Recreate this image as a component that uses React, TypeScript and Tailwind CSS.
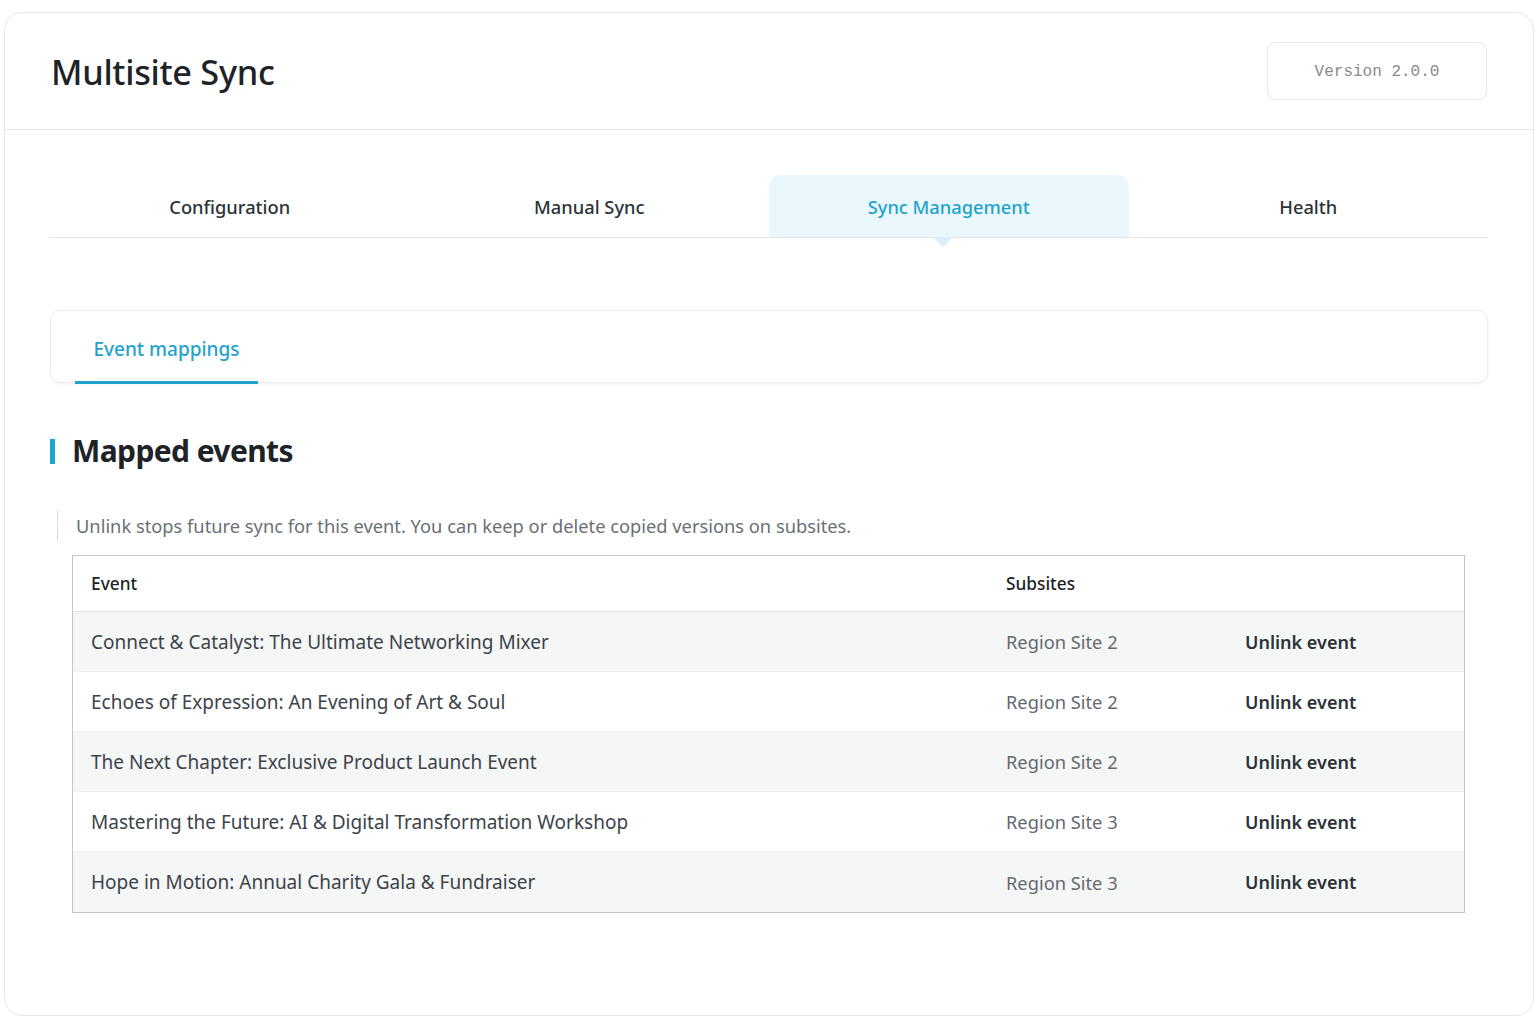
const font = { fontFamily: '"Noto Sans", "Open Sans", sans-serif' };

const tabs = ['Configuration', 'Manual Sync', 'Sync Management', 'Health'];

const rows = [
  { name: 'Connect & Catalyst: The Ultimate Networking Mixer', site: 'Region Site 2' },
  { name: 'Echoes of Expression: An Evening of Art & Soul', site: 'Region Site 2' },
  { name: 'The Next Chapter: Exclusive Product Launch Event', site: 'Region Site 2' },
  { name: 'Mastering the Future: AI & Digital Transformation Workshop', site: 'Region Site 3' },
  { name: 'Hope in Motion: Annual Charity Gala & Fundraiser', site: 'Region Site 3' },
];

export default function App() {
  return (
    <div className="bg-white min-h-[1025px] pl-[4px] pr-[6px] pt-[12px]" style={font}>
      <div className="h-[1004px] rounded-[18px] border border-[#e6e6e6] bg-white">
        {/* header */}
        <header className="h-[117px] flex items-center justify-between px-[46px] border-b border-[#e3e3e3]">
          <h1 className="text-[34.3px] leading-none font-medium text-[#1d2327] tracking-[-0.3px] mt-[2px]">Multisite Sync</h1>
          <div className="w-[220px] h-[58px] mt-[-1px] pt-[2px] rounded-[8px] border border-[#e8e8e8] flex items-center justify-center text-[16px] text-[#8a8a8a]" style={{ fontFamily: '"Liberation Mono", monospace' }}>
            Version 2.0.0
          </div>
        </header>

        <div className="px-[45px] pt-[45px]">
          {/* main tabs */}
          <nav className="grid grid-cols-4 border-b border-[#e4e4e4] h-[63px]">
            {tabs.map((t) => {
              const active = t === 'Sync Management';
              return (
                <div
                  key={t}
                  className={
                    active
                      ? 'relative flex items-center justify-center pt-[2px] rounded-t-[12px] bg-[#eaf7fc] text-[#1fa3cc] text-[18.3px] font-medium'
                      : 'flex items-center justify-center pt-[2px] text-[#2c3338] text-[18.3px] font-medium'
                  }
                >
                  {t}
                  {active && (
                    <span className="absolute left-[164px] top-full w-0 h-0 border-l-[10px] border-r-[10px] border-t-[10px] border-l-transparent border-r-transparent border-t-[#d9eef6]" />
                  )}
                </div>
              );
            })}
          </nav>

          {/* sub tabs */}
          <div className="mt-[72px] h-[73px] rounded-[10px] border border-[#ececec] shadow-[0_1px_3px_rgba(0,0,0,0.06)] px-[24px] flex items-end">
            <div className="w-[183px] h-[61px] pb-[6px] flex items-center justify-center border-b-[3px] border-[#1fa3cc] text-[19px] font-medium text-[#1fa3cc] mb-[-2px]">
              Event mappings
            </div>
          </div>

          {/* heading */}
          <div className="mt-[53px] flex items-center">
            <span className="w-[5px] h-[25px] bg-[#1aa6d6]" />
            <h2 className="ml-[17px] text-[30px] font-bold text-[#1d2327] leading-none tracking-[-0.6px]">Mapped events</h2>
          </div>

          {/* note */}
          <div className="mt-[44px] ml-[7px] border-l border-[#dcdcdc] pl-[18px] h-[31px] flex items-center text-[18.3px] text-[#6b7075]">
            Unlink stops future sync for this event. You can keep or delete copied versions on subsites.
          </div>

          {/* table */}
          <div className="mt-[14px] ml-[22px] mr-[23px] border border-[#c3c4c7]">
            <div className="h-[56px] flex items-center text-[17.3px] font-medium text-[#1d2327] border-b border-[#e6e6e6]">
              <div className="w-[933px] pl-[18px]">Event</div>
              <div>Subsites</div>
            </div>
            {rows.map((r, i) => (
              <div
                key={r.name}
                className={
                  (i % 2 === 0 ? 'bg-[#f5f6f6] ' : 'bg-white ') +
                  'h-[60px] pt-[1px] flex items-center text-[19px] border-b border-[#eeeeee] last:border-b-0'
                }
              >
                <div className="w-[933px] pl-[18px] text-[#3c434a]">{r.name}</div>
                <div className="w-[239px] text-[18.3px] text-[#646970]">{r.site}</div>
                <div className="font-semibold text-[18px] text-[#2c3338]">Unlink event</div>
              </div>
            ))}
          </div>
        </div>
      </div>
    </div>
  );
}
